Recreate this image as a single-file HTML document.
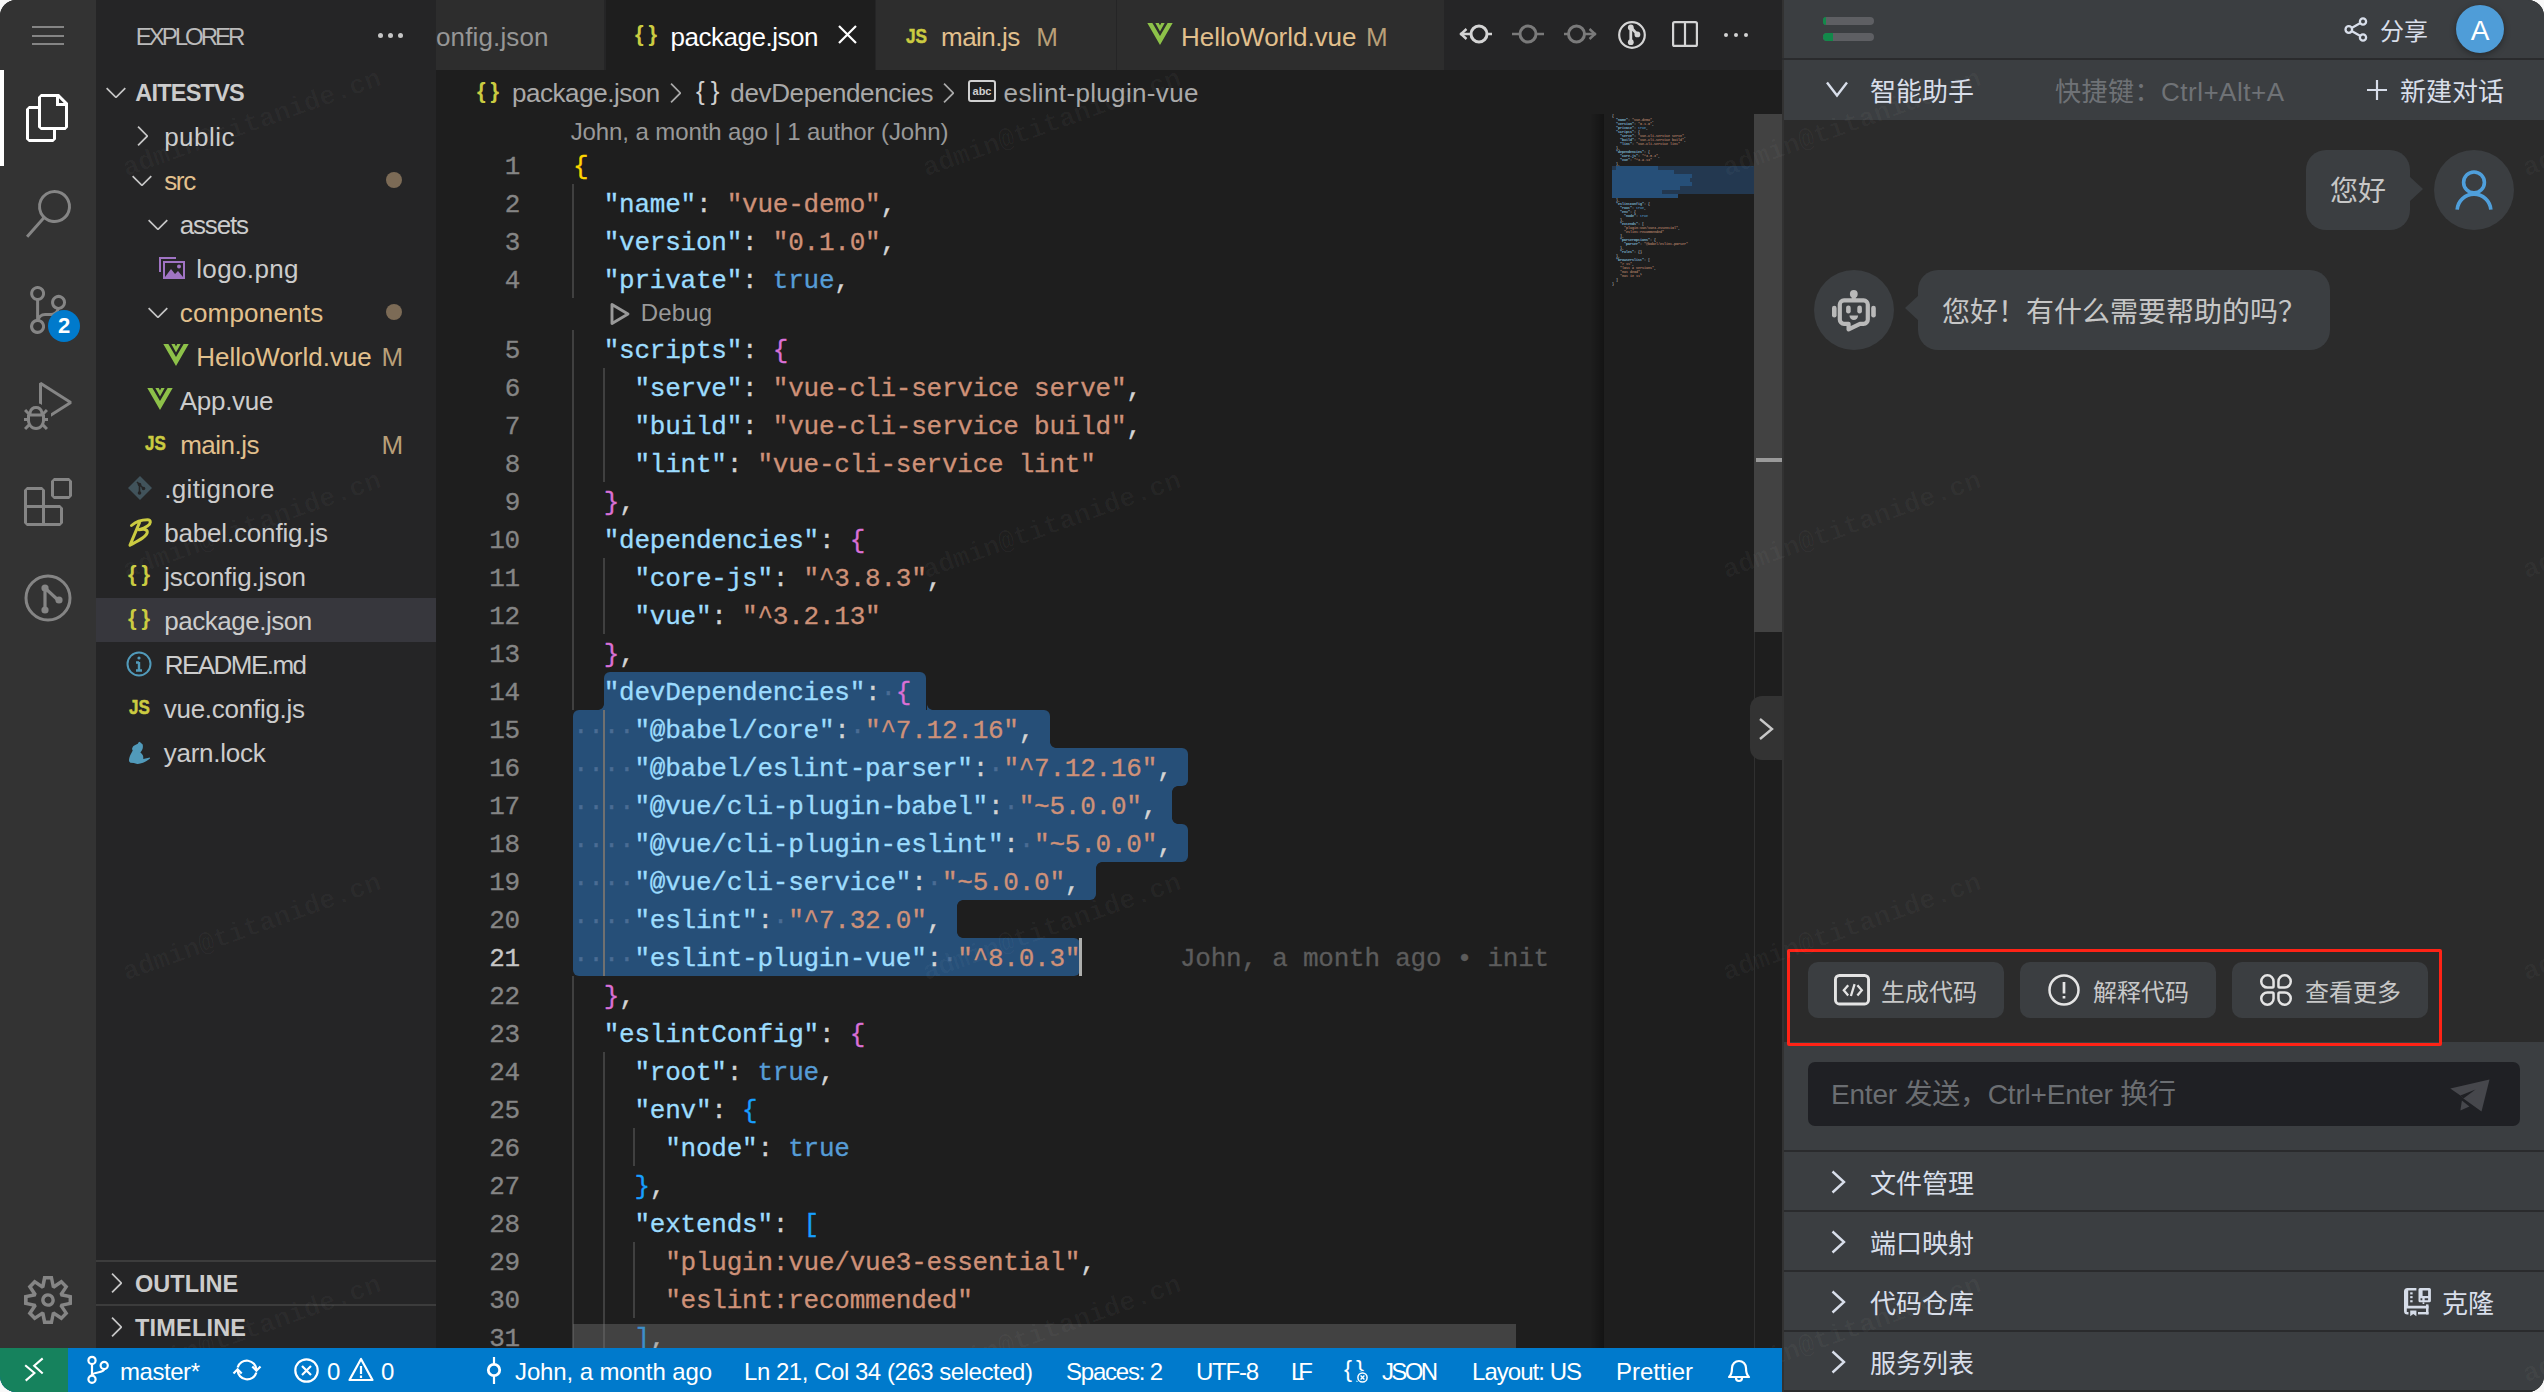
<!DOCTYPE html>
<html lang="zh-CN"><head><meta charset="utf-8"><title>package.json - aitestvs</title>
<style>
*{box-sizing:border-box}
html,body{margin:0;padding:0}
body{width:2544px;height:1392px;overflow:hidden;background:#f8f8f8;font-family:"Liberation Sans","Noto Sans CJK SC",sans-serif;color:#ccc}
#win{position:absolute;left:0;top:0;width:2544px;height:1392px;border-radius:16px;overflow:hidden;background:#1e1e1e}
.abs{position:absolute}
.t{position:absolute;white-space:pre;line-height:1}
svg{position:absolute;overflow:visible}
/* activity */
#act{position:absolute;left:0;top:0;width:96px;height:1348px;background:#333}
/* sidebar */
#side{position:absolute;left:96px;top:0;width:340px;height:1348px;background:#252526}
.row{position:absolute;left:0;width:340px;height:44px}
.row .lbl{position:absolute;top:1px;line-height:44px;font-size:26px;white-space:pre;color:#ccc}
.mod{color:#e2c08d !important}
/* editor */
#ed{position:absolute;left:436px;top:0;width:1346px;height:1348px;background:#1e1e1e}
.code{position:absolute;left:137px;height:38px;line-height:38px;margin-top:2.400px;-webkit-text-stroke:.3px currentColor;font-family:"Liberation Mono",monospace;font-size:26px;letter-spacing:-0.233px;white-space:pre;color:#d4d4d4}
.ln{position:absolute;left:0;width:84px;text-align:right;height:38px;line-height:38px;margin-top:2.400px;-webkit-text-stroke:.3px currentColor;font-family:"Liberation Mono",monospace;font-size:26px;letter-spacing:-0.233px;color:#858585}
.k{color:#9cdcfe}.s{color:#ce9178}.b{color:#569cd6}.b1{color:#ffd700}.b2{color:#da70d6}.b3{color:#179fff}
.ws{color:#4a6c94}
/* status */
#st{position:absolute;left:0;top:1348px;width:1782px;height:44px;background:#007acc;color:#fff;font-size:24px}
/* panel */
#pn{position:absolute;left:1782px;top:0;width:762px;height:1392px;background:#3b3e41;font-family:"Liberation Sans","Noto Sans CJK SC",sans-serif}
</style></head>
<body><div id="win">
<div id="ed">
<div class="abs" style="left:167.7px;top:672px;width:322.8px;height:38px;background:#264f78;border-radius:6px 6px 0 0"></div>
<div class="abs" style="left:137.0px;top:710px;width:476.5px;height:38px;background:#264f78;border-radius:6px 6px 0 0"></div>
<div class="abs" style="left:137.0px;top:748px;width:614.8px;height:38px;background:#264f78;border-radius:0 6px 6px 0"></div>
<div class="abs" style="left:137.0px;top:786px;width:599.4px;height:38px;background:#264f78;border-radius:0"></div>
<div class="abs" style="left:137.0px;top:824px;width:614.8px;height:38px;background:#264f78;border-radius:0 6px 6px 0"></div>
<div class="abs" style="left:137.0px;top:862px;width:522.6px;height:38px;background:#264f78;border-radius:0 0 6px 0"></div>
<div class="abs" style="left:137.0px;top:900px;width:384.2px;height:38px;background:#264f78;border-radius:0"></div>
<div class="abs" style="left:137.0px;top:938px;width:507.2px;height:38px;background:#264f78;border-radius:0 6px 6px 6px"></div>
<div class="abs" style="left:490.5px;top:704px;width:6px;height:6px;background:radial-gradient(circle at 100% 0,rgba(38,79,120,0) 5.500px,#264f78 6.200px)"></div>
<div class="abs" style="left:613.5px;top:742px;width:6px;height:6px;background:radial-gradient(circle at 100% 0,rgba(38,79,120,0) 5.500px,#264f78 6.200px)"></div>
<div class="abs" style="left:736.4px;top:786px;width:6px;height:6px;background:radial-gradient(circle at 100% 100%,rgba(38,79,120,0) 5.500px,#264f78 6.200px)"></div>
<div class="abs" style="left:736.4px;top:818px;width:6px;height:6px;background:radial-gradient(circle at 100% 0,rgba(38,79,120,0) 5.500px,#264f78 6.200px)"></div>
<div class="abs" style="left:659.6px;top:862px;width:6px;height:6px;background:radial-gradient(circle at 100% 100%,rgba(38,79,120,0) 5.500px,#264f78 6.200px)"></div>
<div class="abs" style="left:521.2px;top:900px;width:6px;height:6px;background:radial-gradient(circle at 100% 100%,rgba(38,79,120,0) 5.500px,#264f78 6.200px)"></div>
<div class="abs" style="left:521.2px;top:932px;width:6px;height:6px;background:radial-gradient(circle at 100% 0,rgba(38,79,120,0) 5.500px,#264f78 6.200px)"></div>
<div class="abs" style="left:161.7px;top:704px;width:6px;height:6px;background:radial-gradient(circle at 0 0,rgba(38,79,120,0) 5.500px,#264f78 6.200px)"></div>
<div class="abs" style="left:136px;top:184px;width:2px;height:114px;background:#404040"></div>
<div class="abs" style="left:136px;top:330px;width:2px;height:342px;background:#404040"></div>
<div class="abs" style="left:136px;top:672px;width:2px;height:38px;background:#404040"></div>
<div class="abs" style="left:136px;top:976px;width:2px;height:380px;background:#404040"></div>
<div class="abs" style="left:167px;top:368px;width:2px;height:114px;background:#404040"></div>
<div class="abs" style="left:167px;top:558px;width:2px;height:76px;background:#404040"></div>
<div class="abs" style="left:167px;top:710px;width:2px;height:266px;background:#707070"></div>
<div class="abs" style="left:167px;top:1052px;width:2px;height:304px;background:#404040"></div>
<div class="abs" style="left:197px;top:1128px;width:2px;height:38px;background:#404040"></div>
<div class="abs" style="left:197px;top:1242px;width:2px;height:76px;background:#404040"></div>
<div class="t" style="left:134.7px;top:120.0px;font-size:24px;color:#999;letter-spacing:-0.095px;">John, a month ago | 1 author (John)</div>
<svg style="left:174px;top:302px" width="20" height="24" viewBox="0 0 20 24"><path d="M2 2.500v19L18 12z" fill="none" stroke="#999" stroke-width="2.900" stroke-linejoin="round"/></svg>
<div class="t" style="left:204.7px;top:300.5px;font-size:24px;color:#999;letter-spacing:0.141px;">Debug</div>
<div class="ln" style="top:146px">1</div>
<div class="code" style="top:146px"><span class="b1">{</span></div>
<div class="ln" style="top:184px">2</div>
<div class="code" style="top:184px">  <span class="k">"name"</span>: <span class="s">"vue-demo"</span>,</div>
<div class="ln" style="top:222px">3</div>
<div class="code" style="top:222px">  <span class="k">"version"</span>: <span class="s">"0.1.0"</span>,</div>
<div class="ln" style="top:260px">4</div>
<div class="code" style="top:260px">  <span class="k">"private"</span>: <span class="b">true</span>,</div>
<div class="ln" style="top:330px">5</div>
<div class="code" style="top:330px">  <span class="k">"scripts"</span>: <span class="b2">{</span></div>
<div class="ln" style="top:368px">6</div>
<div class="code" style="top:368px">    <span class="k">"serve"</span>: <span class="s">"vue-cli-service serve"</span>,</div>
<div class="ln" style="top:406px">7</div>
<div class="code" style="top:406px">    <span class="k">"build"</span>: <span class="s">"vue-cli-service build"</span>,</div>
<div class="ln" style="top:444px">8</div>
<div class="code" style="top:444px">    <span class="k">"lint"</span>: <span class="s">"vue-cli-service lint"</span></div>
<div class="ln" style="top:482px">9</div>
<div class="code" style="top:482px">  <span class="b2">}</span>,</div>
<div class="ln" style="top:520px">10</div>
<div class="code" style="top:520px">  <span class="k">"dependencies"</span>: <span class="b2">{</span></div>
<div class="ln" style="top:558px">11</div>
<div class="code" style="top:558px">    <span class="k">"core-js"</span>: <span class="s">"^3.8.3"</span>,</div>
<div class="ln" style="top:596px">12</div>
<div class="code" style="top:596px">    <span class="k">"vue"</span>: <span class="s">"^3.2.13"</span></div>
<div class="ln" style="top:634px">13</div>
<div class="code" style="top:634px">  <span class="b2">}</span>,</div>
<div class="ln" style="top:672px">14</div>
<div class="code" style="top:672px">  <span class="k">"devDependencies"</span>:<span class="ws">·</span><span class="b2">{</span></div>
<div class="ln" style="top:710px">15</div>
<div class="code" style="top:710px"><span class="ws">····</span><span class="k">"@babel/core"</span>:<span class="ws">·</span><span class="s">"^7.12.16"</span>,</div>
<div class="ln" style="top:748px">16</div>
<div class="code" style="top:748px"><span class="ws">····</span><span class="k">"@babel/eslint-parser"</span>:<span class="ws">·</span><span class="s">"^7.12.16"</span>,</div>
<div class="ln" style="top:786px">17</div>
<div class="code" style="top:786px"><span class="ws">····</span><span class="k">"@vue/cli-plugin-babel"</span>:<span class="ws">·</span><span class="s">"~5.0.0"</span>,</div>
<div class="ln" style="top:824px">18</div>
<div class="code" style="top:824px"><span class="ws">····</span><span class="k">"@vue/cli-plugin-eslint"</span>:<span class="ws">·</span><span class="s">"~5.0.0"</span>,</div>
<div class="ln" style="top:862px">19</div>
<div class="code" style="top:862px"><span class="ws">····</span><span class="k">"@vue/cli-service"</span>:<span class="ws">·</span><span class="s">"~5.0.0"</span>,</div>
<div class="ln" style="top:900px">20</div>
<div class="code" style="top:900px"><span class="ws">····</span><span class="k">"eslint"</span>:<span class="ws">·</span><span class="s">"^7.32.0"</span>,</div>
<div class="ln" style="top:938px;color:#c6c6c6">21</div>
<div class="code" style="top:938px"><span class="ws">····</span><span class="k">"eslint-plugin-vue"</span>:<span class="ws">·</span><span class="s">"^8.0.3"</span></div>
<div class="ln" style="top:976px">22</div>
<div class="code" style="top:976px">  <span class="b2">}</span>,</div>
<div class="ln" style="top:1014px">23</div>
<div class="code" style="top:1014px">  <span class="k">"eslintConfig"</span>: <span class="b2">{</span></div>
<div class="ln" style="top:1052px">24</div>
<div class="code" style="top:1052px">    <span class="k">"root"</span>: <span class="b">true</span>,</div>
<div class="ln" style="top:1090px">25</div>
<div class="code" style="top:1090px">    <span class="k">"env"</span>: <span class="b3">{</span></div>
<div class="ln" style="top:1128px">26</div>
<div class="code" style="top:1128px">      <span class="k">"node"</span>: <span class="b">true</span></div>
<div class="ln" style="top:1166px">27</div>
<div class="code" style="top:1166px">    <span class="b3">}</span>,</div>
<div class="ln" style="top:1204px">28</div>
<div class="code" style="top:1204px">    <span class="k">"extends"</span>: <span class="b3">[</span></div>
<div class="ln" style="top:1242px">29</div>
<div class="code" style="top:1242px">      <span class="s">"plugin:vue/vue3-essential"</span>,</div>
<div class="ln" style="top:1280px">30</div>
<div class="code" style="top:1280px">      <span class="s">"eslint:recommended"</span></div>
<div class="ln" style="top:1318px">31</div>
<div class="code" style="top:1318px">    <span class="b3">]</span>,</div>
<div class="abs" style="left:643px;top:938px;width:3px;height:38px;background:#aeafad"></div>
<div class="code" style="left:744px;top:938px;color:#5c5c5c">John, a month ago • init</div>
<div class="abs" style="left:1154px;top:114px;width:14px;height:1234px;background:linear-gradient(to right,rgba(0,0,0,0),rgba(0,0,0,.35))"></div>
<div class="abs" style="left:1168px;top:114px;width:150px;height:1234px;background:#1e1e1e"></div>
<div class="abs" style="left:1176px;top:114px;width:1420px;transform:scale(.1);transform-origin:0 0;font-family:'Liberation Mono',monospace;font-size:33.330px;line-height:40px;white-space:pre;color:#d4d4d4;opacity:.8;font-weight:bold">{
  <span class="k">"name"</span>: <span class="s">"vue-demo"</span>,
  <span class="k">"version"</span>: <span class="s">"0.1.0"</span>,
  <span class="k">"private"</span>: <span class="b">true</span>,
  <span class="k">"scripts"</span>: {
    <span class="k">"serve"</span>: <span class="s">"vue-cli-service serve"</span>,
    <span class="k">"build"</span>: <span class="s">"vue-cli-service build"</span>,
    <span class="k">"lint"</span>: <span class="s">"vue-cli-service lint"</span>
  },
  <span class="k">"dependencies"</span>: {
    <span class="k">"core-js"</span>: <span class="s">"^3.8.3"</span>,
    <span class="k">"vue"</span>: <span class="s">"^3.2.13"</span>
  },
  <span class="k">"devDependencies"</span>: {
    <span class="k">"@babel/core"</span>: <span class="s">"^7.12.16"</span>,
    <span class="k">"@babel/eslint-parser"</span>: <span class="s">"^7.12.16"</span>,
    <span class="k">"@vue/cli-plugin-babel"</span>: <span class="s">"~5.0.0"</span>,
    <span class="k">"@vue/cli-plugin-eslint"</span>: <span class="s">"~5.0.0"</span>,
    <span class="k">"@vue/cli-service"</span>: <span class="s">"~5.0.0"</span>,
    <span class="k">"eslint"</span>: <span class="s">"^7.32.0"</span>,
    <span class="k">"eslint-plugin-vue"</span>: <span class="s">"^8.0.3"</span>
  },
  <span class="k">"eslintConfig"</span>: {
    <span class="k">"root"</span>: <span class="b">true</span>,
    <span class="k">"env"</span>: {
      <span class="k">"node"</span>: <span class="b">true</span>
    },
    <span class="k">"extends"</span>: [
      <span class="s">"plugin:vue/vue3-essential"</span>,
      <span class="s">"eslint:recommended"</span>
    ],
    <span class="k">"parserOptions"</span>: {
      <span class="k">"parser"</span>: <span class="s">"@babel/eslint-parser"</span>
    },
    <span class="k">"rules"</span>: {}
  },
  <span class="k">"browserslist"</span>: [
    <span class="s">"&gt; 1%"</span>,
    <span class="s">"last 2 versions"</span>,
    <span class="s">"not dead"</span>,
    <span class="s">"not ie 11"</span>
  ]
}</div>
<div class="abs" style="left:1176px;top:166px;width:142px;height:28px;background:#233850"></div>
<div class="abs" style="left:1180px;top:166px;width:42px;height:4px;background:#264f78"></div>
<div class="abs" style="left:1176px;top:170px;width:62px;height:4px;background:#264f78"></div>
<div class="abs" style="left:1176px;top:174px;width:80px;height:4px;background:#264f78"></div>
<div class="abs" style="left:1176px;top:178px;width:78px;height:4px;background:#264f78"></div>
<div class="abs" style="left:1176px;top:182px;width:80px;height:4px;background:#264f78"></div>
<div class="abs" style="left:1176px;top:186px;width:68px;height:4px;background:#264f78"></div>
<div class="abs" style="left:1176px;top:190px;width:50px;height:4px;background:#264f78"></div>
<div class="abs" style="left:1176px;top:194px;width:66px;height:4px;background:#264f78"></div>
<div class="abs" style="left:1318px;top:114px;width:28px;height:1234px;background:#1e1e1e;border-left:1px solid #303030"></div>
<div class="abs" style="left:1318px;top:114px;width:28px;height:518px;background:#424242"></div>
<div class="abs" style="left:1320px;top:458px;width:26px;height:4px;background:#9a9a9a"></div>
<div class="abs" style="left:137px;top:1324px;width:943px;height:24px;background:rgba(121,121,121,.4)"></div>
<div class="abs" style="left:1314px;top:696px;width:32px;height:64px;background:#333;border-radius:12px 0 0 12px"></div>
<svg style="left:1322px;top:717px" width="16" height="24" viewBox="0 0 16 24"><path d="M2 2l12 10L2 22" fill="none" stroke="#c8c8c8" stroke-width="2.400"/></svg>
<div class="abs" style="left:0;top:0;width:1346px;height:70px;background:#252526"></div>
<div class="abs" style="left:0px;top:0;width:168px;height:70px;background:#2d2d2d"></div>
<div class="abs" style="left:170px;top:0;width:269px;height:70px;background:#1e1e1e"></div>
<div class="abs" style="left:440px;top:0;width:240px;height:70px;background:#2d2d2d"></div>
<div class="abs" style="left:681px;top:0;width:327px;height:70px;background:#2d2d2d"></div>
<div class="t" style="left:0.0px;top:23.5px;font-size:26px;color:#969696;letter-spacing:0.132px;">onfig.json</div>
<div class="t" style="left:199px;top:23px;font-size:22px;font-weight:bold;color:#cbcb41;letter-spacing:5px">{}</div>
<div class="t" style="left:234.6px;top:23.5px;font-size:26px;color:#fff;letter-spacing:-0.485px;">package.json</div>
<svg style="left:402px;top:25px" width="19" height="19" viewBox="0 0 19 19"><path stroke="#fff" stroke-width="2.200" d="M1 1l17 17M18 1L1 18"/></svg>
<div class="t" style="left:470px;top:25px;font-size:21px;font-weight:bold;color:#cbcb41;-webkit-text-stroke:.500px #cbcb41;transform:scaleX(0.82);transform-origin:0 0">JS</div>
<div class="t" style="left:505.0px;top:23.5px;font-size:26px;color:#e2c08d;letter-spacing:-0.527px;">main.js</div>
<div class="t" style="left:600.3px;top:23.5px;font-size:26px;color:#b89f78;letter-spacing:0.528px;">M</div>
<svg style="left:711px;top:23px" width="26" height="22" viewBox="0 0 30 26"><path fill="#8dc149" d="M0 0h6l9 15.5L24 0h6L15 26z"/><path fill="#8dc149" d="M9.5 0h4L15 3l1.5-3h4L15 10z"/></svg>
<div class="t" style="left:745.0px;top:23.5px;font-size:26px;color:#e2c08d;letter-spacing:-0.025px;">HelloWorld.vue</div>
<div class="t" style="left:930.0px;top:23.5px;font-size:26px;color:#b89f78;letter-spacing:0.428px;">M</div>
<svg style="left:1024px;top:21px" width="32" height="26" viewBox="0 0 32 26" fill="none" stroke="#d4d4d4" stroke-width="3"><circle cx="19" cy="13" r="8"/><path d="M0 13h11M27 13H32" stroke-width="2.600"/><path d="M6.500 8l-5.500 5 5.500 5" stroke-width="2.400"/></svg>
<svg style="left:1076px;top:21px" width="32" height="26" viewBox="0 0 32 26" fill="none" stroke="#7a7a7a" stroke-width="3"><circle cx="16" cy="13" r="8"/><path d="M0 13h8M24 13H32" stroke-width="2.600"/></svg>
<svg style="left:1128px;top:21px" width="32" height="26" viewBox="0 0 32 26" fill="none" stroke="#7a7a7a" stroke-width="3"><circle cx="12.5" cy="13" r="8"/><path d="M0 13h4.5M20.5 13H32" stroke-width="2.600"/><path d="M25.500 8l5.500 5-5.500 5" stroke-width="2.400"/></svg>
<svg style="left:1182px;top:21px" width="28" height="28" viewBox="0 0 28 28" fill="none" stroke="#d4d4d4" stroke-width="2.200"><circle cx="14" cy="14" r="12.800"/><path d="M12.800 6.200v15M12.800 6.200l6.600 7.200" stroke-width="2.800"/><circle cx="12.800" cy="6.400" r="2.900" fill="#d4d4d4" stroke="none"/><circle cx="12.800" cy="21.200" r="2.900" fill="#d4d4d4" stroke="none"/><circle cx="19.400" cy="13.400" r="2.900" fill="#d4d4d4" stroke="none"/></svg>
<svg style="left:1236px;top:21px" width="26" height="26" viewBox="0 0 26 26" fill="none" stroke="#d4d4d4" stroke-width="2.200"><rect x="1.100" y="1.100" width="23.800" height="23.800" rx="1.500"/><path d="M13 1v24"/></svg>
<div class="abs" style="left:1287.5px;top:32.800px;width:4.400px;height:4.400px;border-radius:3px;background:#d4d4d4"></div>
<div class="abs" style="left:1297.7px;top:32.800px;width:4.400px;height:4.400px;border-radius:3px;background:#d4d4d4"></div>
<div class="abs" style="left:1307.8px;top:32.800px;width:4.400px;height:4.400px;border-radius:3px;background:#d4d4d4"></div>
<div class="t" style="left:41px;top:80px;font-size:22px;font-weight:bold;color:#cbcb41;letter-spacing:5px">{}</div>
<div class="t" style="left:76.0px;top:80.0px;font-size:26px;color:#a9a9a9;letter-spacing:-0.449px;">package.json</div>
<svg style="left:223px;top:77px" width="32" height="32" viewBox="0 0 16 16"><path fill="#a9a9a9" d="M10.072 8.024L5.715 3.667l.618-.62L11 7.716v.618L6.333 13l-.618-.619 4.357-4.357z"/></svg>
<div class="t" style="left:260px;top:78px;font-size:26px;color:#d0d0d0;letter-spacing:6px">{}</div>
<div class="t" style="left:294.3px;top:80.0px;font-size:26px;color:#a9a9a9;letter-spacing:-0.354px;">devDependencies</div>
<svg style="left:496px;top:77px" width="32" height="32" viewBox="0 0 16 16"><path fill="#a9a9a9" d="M10.072 8.024L5.715 3.667l.618-.62L11 7.716v.618L6.333 13l-.618-.619 4.357-4.357z"/></svg>
<svg style="left:532px;top:80px" width="28" height="22" viewBox="0 0 28 22"><rect x="1" y="1" width="26" height="20" rx="2" fill="none" stroke="#d0d0d0" stroke-width="2"/><text x="14" y="15" text-anchor="middle" font-family="Liberation Sans,sans-serif" font-size="11" font-weight="bold" fill="#d0d0d0">abc</text></svg>
<div class="t" style="left:567.6px;top:80.0px;font-size:26px;color:#a9a9a9;letter-spacing:0.348px;">eslint-plugin-vue</div>
</div>
<div id="side">
<div class="t" style="left:39.8px;top:24.8px;font-size:24px;color:#bbb;letter-spacing:-3.017px;">EXPLORER</div>
<div class="abs" style="left:281.5px;top:32.500px;width:5px;height:5px;border-radius:3px;background:#c5c5c5"></div>
<div class="abs" style="left:291.5px;top:32.500px;width:5px;height:5px;border-radius:3px;background:#c5c5c5"></div>
<div class="abs" style="left:301.5px;top:32.500px;width:5px;height:5px;border-radius:3px;background:#c5c5c5"></div>
<div class="abs" style="left:0;top:598px;width:340px;height:44px;background:#37373d"></div>
<div class="row" style="top:70px"><svg style="left:4px;top:6px" width="32" height="32" viewBox="0 0 16 16"><path fill="#c5c5c5" d="M7.976 10.072l4.357-4.357.62.618L8.284 11h-.618L3 6.333l.619-.618 4.357 4.357z"/></svg><span class="lbl " style="left:39.2px;letter-spacing:-0.760px;font-weight:bold;font-size:23.500px;color:#ccc;">AITESTVS</span></div>
<div class="row" style="top:114px"><svg style="left:30px;top:6px" width="32" height="32" viewBox="0 0 16 16"><path fill="#c5c5c5" d="M10.072 8.024L5.715 3.667l.618-.62L11 7.716v.618L6.333 13l-.618-.619 4.357-4.357z"/></svg><span class="lbl " style="left:68.2px;letter-spacing:0.473px;">public</span></div>
<div class="row" style="top:158px"><svg style="left:30px;top:6px" width="32" height="32" viewBox="0 0 16 16"><path fill="#c5c5c5" d="M7.976 10.072l4.357-4.357.62.618L8.284 11h-.618L3 6.333l.619-.618 4.357 4.357z"/></svg><span class="lbl mod" style="left:68.2px;letter-spacing:-1.336px;">src</span><div class="abs" style="left:290px;top:14px;width:16px;height:16px;border-radius:8px;background:#7c6b56"></div></div>
<div class="row" style="top:202px"><svg style="left:46px;top:6px" width="32" height="32" viewBox="0 0 16 16"><path fill="#c5c5c5" d="M7.976 10.072l4.357-4.357.62.618L8.284 11h-.618L3 6.333l.619-.618 4.357 4.357z"/></svg><span class="lbl " style="left:83.7px;letter-spacing:-1.151px;">assets</span></div>
<div class="row" style="top:246px"><svg style="left:63px;top:11px" width="26" height="22" viewBox="0 0 26 22"><path fill="none" stroke="#a074c4" stroke-width="2" d="M1 15V1h16"/><rect x="5" y="5" width="20" height="16" fill="none" stroke="#a074c4" stroke-width="2"/><path fill="#a074c4" d="M6 20l6-8 4 5 3-3 5 6z"/><circle cx="20" cy="9.500" r="2" fill="#a074c4"/></svg><span class="lbl " style="left:100.2px;letter-spacing:0.362px;">logo.png</span></div>
<div class="row" style="top:290px"><svg style="left:46px;top:6px" width="32" height="32" viewBox="0 0 16 16"><path fill="#c5c5c5" d="M7.976 10.072l4.357-4.357.62.618L8.284 11h-.618L3 6.333l.619-.618 4.357 4.357z"/></svg><span class="lbl mod" style="left:83.7px;letter-spacing:0.205px;">components</span><div class="abs" style="left:290px;top:14px;width:16px;height:16px;border-radius:8px;background:#7c6b56"></div></div>
<div class="row" style="top:334px"><svg style="left:67px;top:10px" width="26" height="22" viewBox="0 0 30 26"><path fill="#8dc149" d="M0 0h6l9 15.5L24 0h6L15 26z"/><path fill="#8dc149" d="M9.5 0h4L15 3l1.5-3h4L15 10z"/></svg><span class="lbl mod" style="left:100.2px;letter-spacing:-0.018px;">HelloWorld.vue</span><span class="lbl" style="left:285.500px;font-size:26px;color:#b89f78;letter-spacing:0">M</span></div>
<div class="row" style="top:378px"><svg style="left:51px;top:10px" width="26" height="22" viewBox="0 0 30 26"><path fill="#8dc149" d="M0 0h6l9 15.5L24 0h6L15 26z"/><path fill="#8dc149" d="M9.5 0h4L15 3l1.5-3h4L15 10z"/></svg><span class="lbl " style="left:83.7px;letter-spacing:-0.268px;">App.vue</span></div>
<div class="row" style="top:422px"><div class="t" style="left:49px;top:11px;font-size:20px;font-weight:bold;color:#cbcb41;-webkit-text-stroke:.500px #cbcb41;transform:scaleX(0.85);transform-origin:0 0">JS</div><span class="lbl mod" style="left:84.2px;letter-spacing:-0.510px;">main.js</span><span class="lbl" style="left:285.500px;font-size:26px;color:#b89f78;letter-spacing:0">M</span></div>
<div class="row" style="top:466px"><svg style="left:32px;top:10px" width="24" height="24" viewBox="0 0 24 24"><path fill="#41535b" d="M12 0l12 12-12 12L0 12z"/><path stroke="#252526" stroke-width="1.6" fill="none" d="M9 6l7 7M11.500 8.500v9"/><circle cx="11.5" cy="17" r="1.8" fill="#252526"/><circle cx="15.5" cy="12.500" r="1.800" fill="#252526"/><circle cx="11.5" cy="8.500" r="1.800" fill="#252526"/></svg><span class="lbl " style="left:68.2px;letter-spacing:0.370px;">.gitignore</span></div>
<div class="row" style="top:510px"><svg style="left:32px;top:8px" width="26" height="30" viewBox="0 0 26 30"><path fill="none" stroke="#cbcb41" stroke-width="3" stroke-linecap="round" stroke-linejoin="round" d="M3.500 7.500C8 3.500 13 1.800 19.500 1.800c4 0 3.500 4 0 6.200-3 2-6 3-8.500 3.800 4-.8 8.300-1 8.300 2.200 0 4.500-9.500 9-17.300 13.200L11.700 4.200"/></svg><span class="lbl " style="left:68.2px;letter-spacing:-0.174px;">babel.config.js</span></div>
<div class="row" style="top:554px"><div class="t" style="left:32px;top:9px;font-size:22px;font-weight:bold;color:#cbcb41;letter-spacing:5px">{}</div><span class="lbl " style="left:68.2px;letter-spacing:-0.107px;">jsconfig.json</span></div>
<div class="row" style="top:598px"><div class="t" style="left:32px;top:9px;font-size:22px;font-weight:bold;color:#cbcb41;letter-spacing:5px">{}</div><span class="lbl " style="left:68.2px;letter-spacing:-0.467px;">package.json</span></div>
<div class="row" style="top:642px"><svg style="left:30px;top:9px" width="26" height="26" viewBox="0 0 26 26"><circle cx="13" cy="13" r="11.500" fill="none" stroke="#519aba" stroke-width="2"/><path stroke="#519aba" stroke-width="2.400" d="M13 11v9M10 11.500h3M10 19.500h6"/><circle cx="13" cy="7" r="1.600" fill="#519aba"/></svg><span class="lbl " style="left:68.7px;letter-spacing:-1.535px;">README.md</span></div>
<div class="row" style="top:686px"><div class="t" style="left:33px;top:11px;font-size:20px;font-weight:bold;color:#cbcb41;-webkit-text-stroke:.500px #cbcb41;transform:scaleX(0.85);transform-origin:0 0">JS</div><span class="lbl " style="left:67.7px;letter-spacing:-0.261px;">vue.config.js</span></div>
<div class="row" style="top:730px"><svg style="left:32px;top:11px" width="24" height="24" viewBox="0 0 24 24"><path fill="#519aba" d="M11.600.800L14.700 3.600C15 5 15 7 14.500 8 14 9.500 13 10.500 12.400 11.400c1.100 1.100 2.600 2.100 2.800 4.100L15.300 18l6.600-1.500.1 1.100C20 19.500 17 21 15 21.800c-2 .7-4 1.200-5.700 1.100C8 22.800 7 22.300 5.800 22l-3.300-.2C1 21 .800 19.500 1.100 18c.4-2 1.100-3.500 1.800-4.900.6-1.100 1.300-2.600 1.800-3.700C4 8.500 4 7.500 4.400 6.800c.4-.8.600-1.300 1.100-1.700C7 4 8.500 3.300 9.800 2.800L10.400 1.400z"/></svg><span class="lbl " style="left:67.7px;letter-spacing:-0.256px;">yarn.lock</span></div>
<div class="abs" style="left:0;top:1260px;width:340px;height:2px;background:#3c3c3c"></div>
<svg style="left:4px;top:1267px" width="32" height="32" viewBox="0 0 16 16"><path fill="#c5c5c5" d="M10.072 8.024L5.715 3.667l.618-.62L11 7.716v.618L6.333 13l-.618-.619 4.357-4.357z"/></svg>
<div class="t" style="left:39.0px;top:1272.5px;font-size:23.5px;color:#ccc;font-weight:bold;letter-spacing:0.027px;">OUTLINE</div>
<div class="abs" style="left:0;top:1304px;width:340px;height:2px;background:#3c3c3c"></div>
<svg style="left:4px;top:1311px" width="32" height="32" viewBox="0 0 16 16"><path fill="#c5c5c5" d="M10.072 8.024L5.715 3.667l.618-.62L11 7.716v.618L6.333 13l-.618-.619 4.357-4.357z"/></svg>
<div class="t" style="left:39.0px;top:1316.5px;font-size:23.5px;color:#ccc;font-weight:bold;letter-spacing:0.190px;">TIMELINE</div>
</div>
<div id="act">
<div class="abs" style="left:32px;top:26px;width:32px;height:2px;background:#858585"></div>
<div class="abs" style="left:32px;top:35px;width:32px;height:2px;background:#858585"></div>
<div class="abs" style="left:32px;top:43px;width:32px;height:2px;background:#858585"></div>
<div class="abs" style="left:0;top:70px;width:4px;height:96px;background:#fff"></div>
<svg style="left:24px;top:94px" width="48" height="48" viewBox="0 0 24 24"><path fill="#fff" d="M17.5 0h-9L7 1.5V6H2.5L1 7.5v15.07L2.5 24h12.07L16 22.57V18h4.7l1.3-1.43V4.5L17.5 0zm0 2.12l2.38 2.38H17.5V2.12zm-3 20.38h-12v-15H7v9.07L8.5 18h6v4.5zm6-6h-12v-15H16V6h4.5v10.5z"/></svg>
<svg style="left:24px;top:190px" width="48" height="48" viewBox="0 0 24 24"><path fill="#858585" d="M15.25 0a8.25 8.25 0 0 0-6.18 13.72L1 22.88l1.12 1 8.05-9.12A8.251 8.251 0 1 0 15.25.01V0zm0 15a6.75 6.75 0 1 1 0-13.5 6.75 6.75 0 0 1 0 13.5z"/></svg>
<svg style="left:24px;top:286px" width="48" height="48" viewBox="0 0 24 24"><path fill="#858585" d="M21.007 8.222A3.738 3.738 0 0 0 15.045 5.2a3.737 3.737 0 0 0 1.156 6.583 2.988 2.988 0 0 1-2.668 1.67h-2.99a4.456 4.456 0 0 0-2.989 1.165V7.4a3.737 3.737 0 1 0-1.494 0v9.117a3.776 3.776 0 1 0 1.816.099 2.99 2.99 0 0 1 2.668-1.667h2.99a4.484 4.484 0 0 0 4.223-3.039 3.736 3.736 0 0 0 3.25-3.687zM4.565 3.738a2.242 2.242 0 1 1 4.484 0 2.242 2.242 0 0 1-4.484 0zm4.484 16.441a2.242 2.242 0 1 1-4.484 0 2.242 2.242 0 0 1 4.484 0zm8.221-9.715a2.242 2.242 0 1 1 0-4.485 2.242 2.242 0 0 1 0 4.485z"/></svg>
<div class="abs" style="left:48px;top:310px;width:32px;height:32px;border-radius:16px;background:#007acc;color:#fff;font-weight:bold;font-size:22px;line-height:32px;text-align:center">2</div>
<svg style="left:24px;top:382px" width="48" height="48" viewBox="0 0 24 24"><path fill="#858585" d="M10.94 13.5l-1.32 1.32a3.73 3.73 0 0 0-7.24 0L1.06 13.5 0 14.56l1.72 1.72-.22.22V18H0v1.5h1.5v.08c.077.489.214.966.41 1.42L0 22.94 1.06 24l1.65-1.65A4.308 4.308 0 0 0 6 24a4.31 4.31 0 0 0 3.29-1.65L10.94 24 12 22.94 10.09 21c.198-.464.336-.951.41-1.45v-.1H12V18h-1.5v-1.5l-.22-.22L12 14.56l-1.06-1.06zM6 13.5a2.25 2.25 0 0 1 2.25 2.25h-4.5A2.25 2.25 0 0 1 6 13.5zm3 6a3.33 3.33 0 0 1-3 3 3.33 3.33 0 0 1-3-3v-2.25h6v2.25zm14.76-9.9v1.26L13.5 17.37V15.6l8.5-5.37L9 2v9.46a5.07 5.07 0 0 0-1.5-.72V.63L8.64 0l15.12 9.6z"/></svg>
<svg style="left:24px;top:478px" width="48" height="48" viewBox="0 0 24 24"><path fill="#858585" d="M13.5 1.5L15 0h7.5L24 1.5V9l-1.5 1.5H15L13.5 9V1.5zm1.5 0V9h7.5V1.5H15zM0 15V6l1.5-1.5H9L10.5 6v7.5H18l1.5 1.5v7.5L18 24H1.5L0 22.5V15zm9-1.5V6H1.5v7.5H9zM9 15H1.5v7.5H9V15zm1.5 7.5H18V15h-7.5v7.5z"/></svg>
<svg style="left:24px;top:574px" width="48" height="48" viewBox="0 0 48 48" fill="none" stroke="#858585" stroke-width="3"><circle cx="24" cy="24" r="22"/><path d="M21 14v22M21 14l14 13" stroke-width="3.2"/><circle cx="21" cy="14" r="3.6" fill="#858585" stroke="none"/><circle cx="21" cy="36" r="3.6" fill="#858585" stroke="none"/><circle cx="35" cy="26" r="3.6" fill="#858585" stroke="none"/></svg>
<svg style="left:24px;top:1276px" width="48" height="48" viewBox="0 0 24 24"><path fill="#858585" d="M19.85 8.75l4.15.83v4.84l-4.15.83 2.35 3.52-3.43 3.43-3.52-2.35-.83 4.15H9.58l-.83-4.15-3.52 2.35-3.43-3.43 2.35-3.52L0 14.42V9.58l4.15-.83L1.8 5.23 5.23 1.8l3.52 2.35L9.58 0h4.84l.83 4.15 3.52-2.35 3.43 3.43-2.35 3.52zm-1.57 5.07l4-.81v-2l-4-.81-.54-1.3 2.29-3.43-1.43-1.43-3.43 2.29-1.3-.54-.81-4h-2l-.81 4-1.3.54-3.43-2.29-1.43 1.43L6.38 8.9l-.54 1.3-4 .81v2l4 .81.54 1.3-2.29 3.43 1.43 1.43 3.43-2.29 1.3.54.81 4h2l.81-4 1.3-.54 3.43 2.29 1.43-1.43-2.29-3.43.54-1.3zm-8.186-4.672A3.43 3.43 0 0 1 12 8.57 3.44 3.44 0 0 1 15.43 12a3.43 3.43 0 1 1-5.336-2.852zm.956 4.274c.281.188.612.288.95.288A1.7 1.7 0 0 0 13.71 12a1.71 1.71 0 1 0-2.66 1.422z"/></svg>
</div>
<div id="pn">
<div class="abs" style="left:0;top:0;width:2px;height:1392px;background:#323232"></div>
<div class="abs" style="left:0;top:58px;width:762px;height:2px;background:#2a2b2d"></div>
<div class="abs" style="left:41px;top:17px;width:51px;height:8px;border-radius:4px;background:#5e5f63"></div>
<div class="abs" style="left:41px;top:17px;width:3px;height:8px;border-radius:4px 0 0 4px;background:#12894a"></div>
<div class="abs" style="left:41px;top:33px;width:51px;height:8px;border-radius:4px;background:#5e5f63"></div>
<div class="abs" style="left:41px;top:33px;width:10px;height:8px;border-radius:4px 0 0 4px;background:#12894a"></div>
<svg style="left:562px;top:17px" width="24" height="25" viewBox="0 0 24 25" fill="none" stroke="#d8deea" stroke-width="2.300"><circle cx="19" cy="4.500" r="3.100"/><circle cx="4.800" cy="12.500" r="3.300"/><circle cx="19" cy="20.500" r="3.100"/><path d="M7.600 11l8.800-5M7.600 14l8.800 5"/></svg>
<div class="t" style="left:598.0px;top:20.0px;font-size:24px;color:#d8deea;">分享</div>
<div class="abs" style="left:674px;top:5px;width:48px;height:48px;border-radius:24px;background:#4f9dd8;box-shadow:0 2px 6px rgba(0,0,0,.35);color:#fff;font-size:28px;line-height:51px;text-align:center">A</div>
<svg style="left:44px;top:81px" width="22" height="17" viewBox="0 0 22 17"><path d="M1 1.500l10 13 10-13" fill="none" stroke="#d8deea" stroke-width="2.400"/></svg>
<div class="t" style="left:88.0px;top:79.0px;font-size:26px;color:#d8deea;">智能助手</div>
<div class="t" style="left:273.0px;top:79.0px;font-size:26px;color:#6f7276;letter-spacing:0.500px;">快捷键：Ctrl+Alt+A</div>
<svg style="left:585px;top:80px" width="20" height="20" viewBox="0 0 20 20"><path d="M10 0v20M0 10h20" stroke="#d8deea" stroke-width="2.200"/></svg>
<div class="t" style="left:618.0px;top:79.0px;font-size:26px;color:#d8deea;">新建对话</div>
<div class="abs" style="left:2px;top:120px;width:760px;height:922px;background:#2b2b2b"></div>
<div class="abs" style="left:524px;top:150px;width:104px;height:80px;border-radius:20px;background:#3b3e41"></div>
<svg style="left:627px;top:176px" width="15" height="26" viewBox="0 0 15 26"><path d="M0 0l14 13L0 26z" fill="#3b3e41"/></svg>
<div class="t" style="left:548.0px;top:178.0px;font-size:28px;color:#c6c6c6;">您好</div>
<div class="abs" style="left:652px;top:150px;width:80px;height:80px;border-radius:40px;background:#3b3e41"></div>
<svg style="left:673px;top:170px" width="38" height="41" viewBox="0 0 38 41" fill="none" stroke="#4f9fdb" stroke-width="3.600"><circle cx="19" cy="12.400" r="10.400"/><path d="M2.150 39.700A16.900 16.900 0 0 1 35.850 39.700"/></svg>
<div class="abs" style="left:32px;top:270px;width:80px;height:80px;border-radius:40px;background:#3b3e41"></div>
<svg style="left:50.2px;top:289.500px" width="44" height="42" viewBox="0 0 44 42" fill="#b9b9b9"><path fill="none" stroke="#b9b9b9" stroke-width="4.200" stroke-linejoin="round" d="M12 10.400h19.600a4.200 4.200 0 0 1 4.200 4.200v15a4.200 4.200 0 0 1-4.200 4.200H28L16.600 39.400V33.800H12a4.200 4.200 0 0 1-4.200-4.200v-15a4.200 4.200 0 0 1 4.200-4.200z"/><circle cx="21.800" cy="3.900" r="3.900"/><rect x="19.800" y="4" width="4" height="5.500"/><rect x="0" y="15.800" width="4.600" height="11.800" rx="2.300"/><rect x="39.200" y="15.800" width="4.600" height="11.800" rx="2.300"/><rect x="14.100" y="15.500" width="4.600" height="8.100" rx="2.300"/><rect x="25.300" y="15.500" width="4.600" height="8.100" rx="2.300"/><path d="M17.500 25.600h8.600a4.300 4.300 0 0 1-8.600 0z"/></svg>
<div class="abs" style="left:136px;top:270px;width:412px;height:80px;border-radius:20px;background:#3b3e41"></div>
<svg style="left:122px;top:295px" width="15" height="26" viewBox="0 0 15 26"><path d="M15 0L1 13l14 13z" fill="#3b3e41"/></svg>
<div class="t" style="left:160.0px;top:299.0px;font-size:28px;color:#c6c6c6;">您好！有什么需要帮助的吗？</div>
<div class="abs" style="left:26px;top:962px;width:196px;height:56px;border-radius:10px;background:#3b3e41"></div>
<svg style="left:52px;top:974.200px" width="36" height="31.400" viewBox="0 0 36 31.400" fill="none" stroke="#e4e4e4"><rect x="1.450" y="1.450" width="33.100" height="28.500" rx="4" stroke-width="2.900"/><path d="M14.200 11.200L9.800 16.300l4.400 5.100M23.400 11.200l4.400 5.100-4.400 5.100M20.600 10.200L16.900 22" stroke-width="2.300"/></svg>
<div class="t" style="left:99.0px;top:980.5px;font-size:24px;color:#c8c8c8;">生成代码</div>
<div class="abs" style="left:238px;top:962px;width:196px;height:56px;border-radius:10px;background:#3b3e41"></div>
<svg style="left:266px;top:974px" width="32" height="32" viewBox="0 0 32 32" fill="none" stroke="#e4e4e4" stroke-width="2.500"><circle cx="16" cy="16" r="14.500"/><path d="M16 8v11.500M16 22v2.600" stroke-width="2.700"/></svg>
<div class="t" style="left:311.0px;top:980.5px;font-size:24px;color:#c8c8c8;">解释代码</div>
<div class="abs" style="left:450px;top:962px;width:196px;height:56px;border-radius:10px;background:#3b3e41"></div>
<svg style="left:478px;top:974px" width="32" height="32" viewBox="0 0 32 32" fill="none" stroke="#e4e4e4" stroke-width="2.500"><path d="M7.400 1.250A6.150 6.150 0 0 0 7.400 13.550H12.300a1.250 1.250 0 0 0 1.250-1.250V7.400A6.150 6.150 0 0 0 7.400 1.250z"/><path d="M7.400 1.250A6.150 6.150 0 0 0 7.400 13.550H12.300a1.250 1.250 0 0 0 1.250-1.250V7.400A6.150 6.150 0 0 0 7.400 1.250z" transform="translate(32,0) scale(-1,1)"/><path d="M7.400 1.250A6.150 6.150 0 0 0 7.400 13.550H12.300a1.250 1.250 0 0 0 1.250-1.250V7.400A6.150 6.150 0 0 0 7.400 1.250z" transform="translate(0,32) scale(1,-1)"/><path d="M7.400 1.250A6.150 6.150 0 0 0 7.400 13.550H12.300a1.250 1.250 0 0 0 1.250-1.250V7.400A6.150 6.150 0 0 0 7.400 1.250z" transform="translate(32,32) scale(-1,-1)"/></svg>
<div class="t" style="left:523.0px;top:980.5px;font-size:24px;color:#c8c8c8;">查看更多</div>
<div class="abs" style="left:26px;top:1062px;width:712px;height:64px;border-radius:7px;background:#1f2024"></div>
<div class="t" style="left:49.0px;top:1081.0px;font-size:28px;color:#6b6e72;letter-spacing:-0.205px;">Enter 发送，Ctrl+Enter 换行</div>
<svg style="left:668px;top:1078px" width="41" height="35" viewBox="0 0 41 35"><path d="M.300 10.400L39.500 1.400 31.500 33.500 13.400 20.500 10.400 17.600z" fill="#46474c"/><path d="M25.500 11.400L10.400 17.600 13.400 20.500z" fill="#1f2024"/><path d="M11.900 22.500l7.500 6-9 4z" fill="#46474c"/></svg>
<div class="abs" style="left:5px;top:949px;width:655px;height:97px;border:3px solid #ff2316;border-radius:2px"></div>
<div class="abs" style="left:2px;top:1150px;width:760px;height:2px;background:#2a2b2d"></div>
<svg style="left:49px;top:1170px" width="15" height="24" viewBox="0 0 15 24"><path d="M1.500 1.500l11.500 10.500-11.500 10.500" fill="none" stroke="#d8deea" stroke-width="2.400"/></svg>
<div class="t" style="left:88.0px;top:1170.5px;font-size:26px;color:#d8deea;">文件管理</div>
<div class="abs" style="left:2px;top:1210px;width:760px;height:2px;background:#2a2b2d"></div>
<svg style="left:49px;top:1230px" width="15" height="24" viewBox="0 0 15 24"><path d="M1.500 1.500l11.500 10.500-11.500 10.500" fill="none" stroke="#d8deea" stroke-width="2.400"/></svg>
<div class="t" style="left:88.0px;top:1230.5px;font-size:26px;color:#d8deea;">端口映射</div>
<div class="abs" style="left:2px;top:1270px;width:760px;height:2px;background:#2a2b2d"></div>
<svg style="left:49px;top:1290px" width="15" height="24" viewBox="0 0 15 24"><path d="M1.500 1.500l11.500 10.500-11.500 10.500" fill="none" stroke="#d8deea" stroke-width="2.400"/></svg>
<div class="t" style="left:88.0px;top:1290.5px;font-size:26px;color:#d8deea;">代码仓库</div>
<div class="abs" style="left:2px;top:1330px;width:760px;height:2px;background:#2a2b2d"></div>
<svg style="left:49px;top:1350px" width="15" height="24" viewBox="0 0 15 24"><path d="M1.500 1.500l11.500 10.500-11.500 10.500" fill="none" stroke="#d8deea" stroke-width="2.400"/></svg>
<div class="t" style="left:88.0px;top:1350.5px;font-size:26px;color:#d8deea;">服务列表</div>
<svg style="left:621.6px;top:1287.800px" width="27" height="29" viewBox="0 0 27 29" fill="#d5dce8"><path d="M3.500 0H12.400V2.500H4.200V17.800H24.500V20.400H2.800V24H4.500V26.400H3.500A3.500 3.500 0 0 1 0 22.900V3.500A3.500 3.500 0 0 1 3.500 0z"/><rect x="22" y="16.400" width="2.500" height="10"/><rect x="14" y="24" width="10.500" height="2.400"/><path d="M6.200 22.600H12.400V28.300L9.300 25.900 6.200 28.300z"/><rect x="6.200" y="4.300" width="2.400" height="2.100"/><rect x="6.200" y="8.100" width="2.400" height="2.100"/><rect x="6.200" y="12.200" width="2.400" height="2.100"/><path fill-rule="evenodd" d="M16 0h9.400a1.500 1.500 0 0 1 1.500 1.500v11.300a1.500 1.500 0 0 1-1.500 1.500H16a1.500 1.500 0 0 1-1.500-1.500V1.500A1.500 1.500 0 0 1 16 0zM18.600 2.600v5.500h5.500V2.600zM16.500 10.200v2h1.800v-2zM20.700 10.200v2h3.400v-2z"/><rect x="18.600" y="14.300" width="1.700" height="1.700"/></svg>
<div class="t" style="left:660.0px;top:1291.0px;font-size:26px;color:#d8deea;">克隆</div>
<div class="abs" style="left:2px;top:1390px;width:760px;height:2px;background:#2a2b2d"></div>
</div>
<div class="abs" style="left:0;top:0;width:2544px;height:1392px;pointer-events:none">
<div class="t" style="left:101.7px;top:103.9px;width:300px;height:40px;line-height:40px;text-align:center;font-family:'Liberation Mono',monospace;font-size:26.700px;color:rgba(255,255,255,.03);font-weight:bold;transform:rotate(-19.700deg)">admin@titanide.cn</div>
<div class="t" style="left:101.7px;top:505.9px;width:300px;height:40px;line-height:40px;text-align:center;font-family:'Liberation Mono',monospace;font-size:26.700px;color:rgba(255,255,255,.03);font-weight:bold;transform:rotate(-19.700deg)">admin@titanide.cn</div>
<div class="t" style="left:101.7px;top:907.9px;width:300px;height:40px;line-height:40px;text-align:center;font-family:'Liberation Mono',monospace;font-size:26.700px;color:rgba(255,255,255,.03);font-weight:bold;transform:rotate(-19.700deg)">admin@titanide.cn</div>
<div class="t" style="left:101.7px;top:1309.9px;width:300px;height:40px;line-height:40px;text-align:center;font-family:'Liberation Mono',monospace;font-size:26.700px;color:rgba(255,255,255,.03);font-weight:bold;transform:rotate(-19.700deg)">admin@titanide.cn</div>
<div class="t" style="left:901.7px;top:103.9px;width:300px;height:40px;line-height:40px;text-align:center;font-family:'Liberation Mono',monospace;font-size:26.700px;color:rgba(255,255,255,.03);font-weight:bold;transform:rotate(-19.700deg)">admin@titanide.cn</div>
<div class="t" style="left:901.7px;top:505.9px;width:300px;height:40px;line-height:40px;text-align:center;font-family:'Liberation Mono',monospace;font-size:26.700px;color:rgba(255,255,255,.03);font-weight:bold;transform:rotate(-19.700deg)">admin@titanide.cn</div>
<div class="t" style="left:901.7px;top:907.9px;width:300px;height:40px;line-height:40px;text-align:center;font-family:'Liberation Mono',monospace;font-size:26.700px;color:rgba(255,255,255,.03);font-weight:bold;transform:rotate(-19.700deg)">admin@titanide.cn</div>
<div class="t" style="left:901.7px;top:1309.9px;width:300px;height:40px;line-height:40px;text-align:center;font-family:'Liberation Mono',monospace;font-size:26.700px;color:rgba(255,255,255,.03);font-weight:bold;transform:rotate(-19.700deg)">admin@titanide.cn</div>
<div class="t" style="left:1701.7px;top:103.9px;width:300px;height:40px;line-height:40px;text-align:center;font-family:'Liberation Mono',monospace;font-size:26.700px;color:rgba(255,255,255,.03);font-weight:bold;transform:rotate(-19.700deg)">admin@titanide.cn</div>
<div class="t" style="left:1701.7px;top:505.9px;width:300px;height:40px;line-height:40px;text-align:center;font-family:'Liberation Mono',monospace;font-size:26.700px;color:rgba(255,255,255,.03);font-weight:bold;transform:rotate(-19.700deg)">admin@titanide.cn</div>
<div class="t" style="left:1701.7px;top:907.9px;width:300px;height:40px;line-height:40px;text-align:center;font-family:'Liberation Mono',monospace;font-size:26.700px;color:rgba(255,255,255,.03);font-weight:bold;transform:rotate(-19.700deg)">admin@titanide.cn</div>
<div class="t" style="left:1701.7px;top:1309.9px;width:300px;height:40px;line-height:40px;text-align:center;font-family:'Liberation Mono',monospace;font-size:26.700px;color:rgba(255,255,255,.03);font-weight:bold;transform:rotate(-19.700deg)">admin@titanide.cn</div>
<div class="t" style="left:2501.7px;top:103.9px;width:300px;height:40px;line-height:40px;text-align:center;font-family:'Liberation Mono',monospace;font-size:26.700px;color:rgba(255,255,255,.03);font-weight:bold;transform:rotate(-19.700deg)">admin@titanide.cn</div>
<div class="t" style="left:2501.7px;top:505.9px;width:300px;height:40px;line-height:40px;text-align:center;font-family:'Liberation Mono',monospace;font-size:26.700px;color:rgba(255,255,255,.03);font-weight:bold;transform:rotate(-19.700deg)">admin@titanide.cn</div>
<div class="t" style="left:2501.7px;top:907.9px;width:300px;height:40px;line-height:40px;text-align:center;font-family:'Liberation Mono',monospace;font-size:26.700px;color:rgba(255,255,255,.03);font-weight:bold;transform:rotate(-19.700deg)">admin@titanide.cn</div>
<div class="t" style="left:2501.7px;top:1309.9px;width:300px;height:40px;line-height:40px;text-align:center;font-family:'Liberation Mono',monospace;font-size:26.700px;color:rgba(255,255,255,.03);font-weight:bold;transform:rotate(-19.700deg)">admin@titanide.cn</div>
</div>
<div id="st">
<div class="abs" style="left:0;top:0;width:68px;height:44px;background:#16825d"></div>
<svg style="left:25px;top:9px" width="20" height="26" viewBox="0 0 20 26"><path d="M.200 8.300L9.400 16 .700 23.600M17.700 1.400L9.200 8.700l8.500 7.800" fill="none" stroke="#fff" stroke-width="2.100"/></svg>
<svg style="left:86px;top:9px" width="24" height="28" viewBox="0 0 24 28" fill="none" stroke="#fff" stroke-width="2.200"><circle cx="6" cy="3.400" r="3.600"/><circle cx="6" cy="22.200" r="3.600"/><circle cx="18.200" cy="8.500" r="3.600"/><path d="M6 7v11.600M18.200 12.100C18.200 17 6 14 6 18.600"/></svg>
<div class="t" style="left:120.0px;top:11.5px;font-size:24px;color:#fff;letter-spacing:-0.448px;">master*</div>
<svg style="left:233px;top:9px" width="28" height="26" viewBox="0 0 28 26" fill="none" stroke="#fff" stroke-width="2.200"><path d="M4.600 10.500a9.600 9.600 0 0 1 18.800 2.500M23.400 15.500a9.600 9.600 0 0 1-18.800-2.500"/><path d="M19.300 9.500l4.100 4.200 4.100-4.200M.500 16.500l4.100-4.200 4.100 4.200"/></svg>
<svg style="left:294px;top:10px" width="25" height="25" viewBox="0 0 25 25" fill="none" stroke="#fff" stroke-width="2.200"><circle cx="12.500" cy="12.500" r="11.200"/><path d="M8 8l9 9M17 8l-9 9"/></svg>
<div class="t" style="left:327.0px;top:11.5px;font-size:24px;color:#fff;">0</div>
<svg style="left:348px;top:9px" width="26" height="25" viewBox="0 0 26 25" fill="none" stroke="#fff" stroke-width="2.200" stroke-linejoin="round"><path d="M13 2L1.500 23h23z"/><path d="M13 9v8M13 18.500v2.500"/></svg>
<div class="t" style="left:381.0px;top:11.5px;font-size:24px;color:#fff;">0</div>
<svg style="left:485px;top:9px" width="18" height="27" viewBox="0 0 18 27" fill="none" stroke="#fff" stroke-width="2.200"><circle cx="9" cy="13" r="5.700" stroke-width="2.800"/><path d="M9 0v7.300M9 18.700V27"/></svg>
<div class="t" style="left:515.0px;top:11.5px;font-size:24px;color:#fff;letter-spacing:-0.113px;">John, a month ago</div>
<div class="t" style="left:744.0px;top:11.5px;font-size:24px;color:#fff;letter-spacing:-0.464px;">Ln 21, Col 34 (263 selected)</div>
<div class="t" style="left:1066.0px;top:11.5px;font-size:24px;color:#fff;letter-spacing:-1.217px;">Spaces: 2</div>
<div class="t" style="left:1196.0px;top:11.5px;font-size:24px;color:#fff;letter-spacing:-1.250px;">UTF-8</div>
<div class="t" style="left:1291.0px;top:11.5px;font-size:24px;color:#fff;letter-spacing:-6.016px;">LF</div>
<div class="t" style="left:1344px;top:8.500px;font-size:24px;color:#fff;letter-spacing:4px">{}</div>
<svg style="left:1356px;top:22.500px" width="13" height="13" viewBox="0 0 13 13"><circle cx="6.500" cy="6.500" r="6.500" fill="#007acc"/><circle cx="6.500" cy="6.500" r="4.600" fill="none" stroke="#fff" stroke-width="1.500"/><path d="M4.600 4.600l3.800 3.800M8.400 4.600L4.600 8.400" stroke="#fff" stroke-width="1.400"/></svg>
<div class="t" style="left:1382.0px;top:11.5px;font-size:24px;color:#fff;letter-spacing:-2.672px;">JSON</div>
<div class="t" style="left:1472.0px;top:11.5px;font-size:24px;color:#fff;letter-spacing:-0.970px;">Layout: US</div>
<div class="t" style="left:1616.0px;top:11.5px;font-size:24px;color:#fff;letter-spacing:-0.051px;">Prettier</div>
<svg style="left:1726px;top:9px" width="26" height="28" viewBox="0 0 26 28" fill="none" stroke="#fff" stroke-width="2.200" stroke-linejoin="round"><path d="M3 20c2.500-2 3-4 3-9a7 7 0 0 1 14 0c0 5 .5 7 3 9z"/><path d="M10 21a3 3 0 0 0 6 0"/></svg>
</div>
</div></body></html>
